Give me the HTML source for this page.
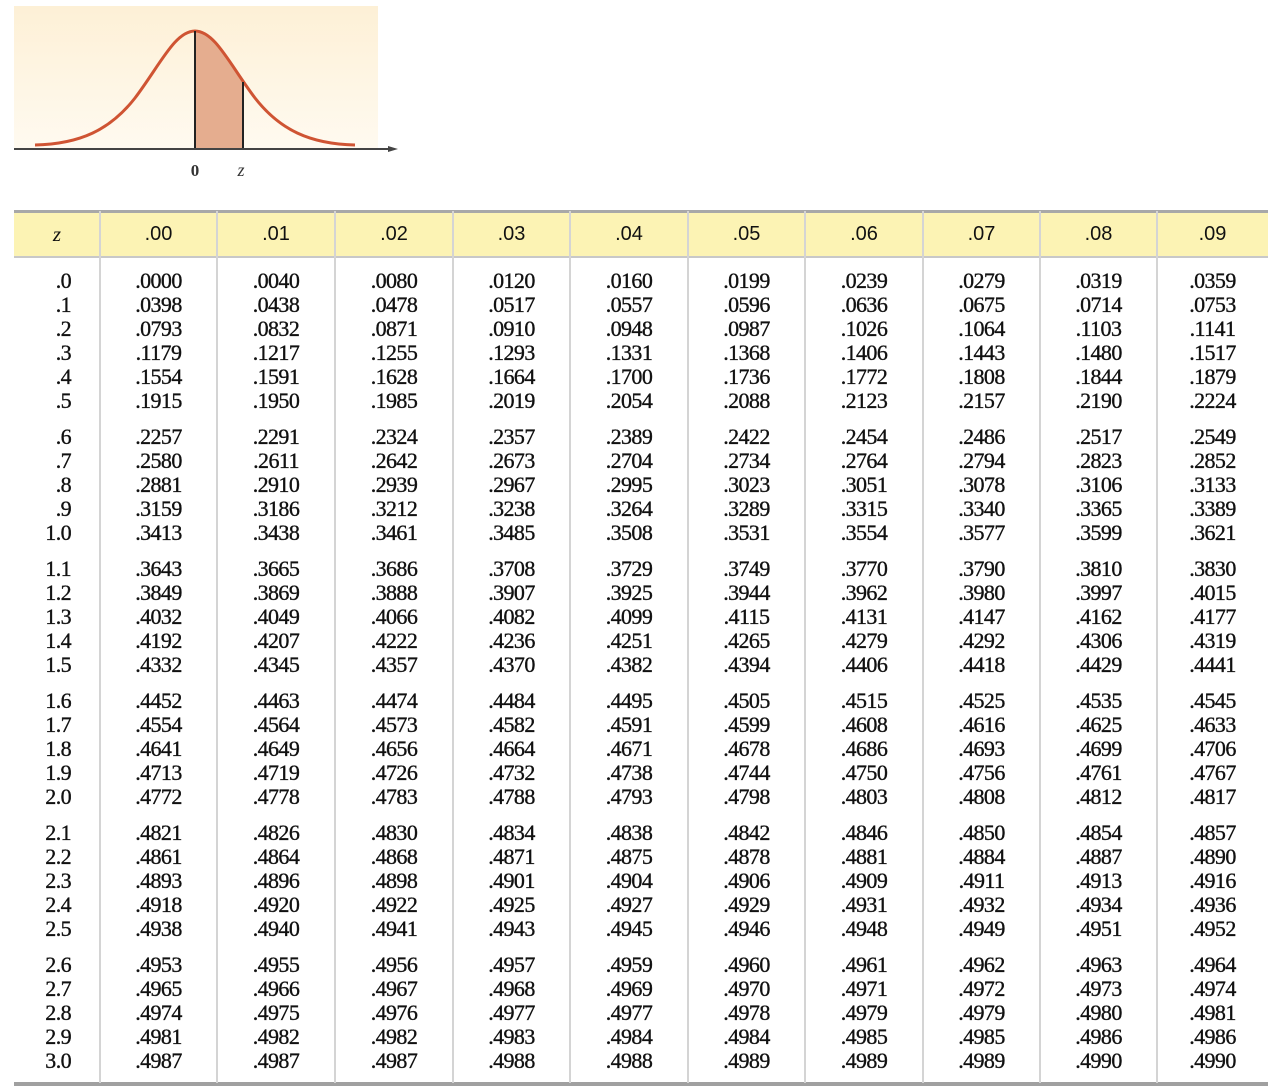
<!DOCTYPE html>
<html><head><meta charset="utf-8"><style>
body{margin:0;width:1268px;height:1086px;background:#fff;position:relative;overflow:hidden;font-family:"Liberation Serif",serif;}
.hdr{position:absolute;top:213px;left:14px;width:1254px;height:43px;background:#fcf3b4;}
.hl{position:absolute;left:14px;width:1254px;background:#9a9a9a;}
.vl{position:absolute;top:211px;height:872px;width:2px;background:#d4d4d4;}
.h{position:absolute;top:213px;height:43px;line-height:43px;text-align:center;font-family:"Liberation Sans",sans-serif;font-size:20px;color:#111;}
.col{position:absolute;top:269px;text-align:center;font-size:22px;line-height:24px;color:#111;letter-spacing:-0.6px;-webkit-text-stroke:0.35px #111;}
.col div{margin-bottom:12px;}
.zc{text-align:right;}
</style></head><body>
<svg width="420" height="190" style="position:absolute;left:0;top:0">
<defs><linearGradient id="g" x1="0" y1="0" x2="0" y2="1"><stop offset="0" stop-color="#fdf0d6"/><stop offset="1" stop-color="#fffaf0"/></linearGradient></defs>
<rect x="14" y="6" width="364" height="142" fill="url(#g)"/>
<path d="M195,31 C210,31 225,50 243,80 L243,149 L195,149 Z" fill="#e5ad8f"/>
<path fill="none" stroke="#cf5433" stroke-width="3" d="M35,145 C80,144 110,130 135,98 C160,65 175,31 195,31 C215,31 230,65 255,98 C280,130 310,144 355,145"/>
<line x1="195" y1="31" x2="195" y2="149" stroke="#222" stroke-width="2"/>
<line x1="243" y1="82" x2="243" y2="149" stroke="#222" stroke-width="2"/>
<line x1="14" y1="149" x2="392" y2="149" stroke="#444" stroke-width="2"/>
<polygon points="398,149 388,146 388,152" fill="#444"/>
<text x="195" y="176" font-family="Liberation Serif" font-weight="bold" font-size="17" text-anchor="middle" fill="#333">0</text>
<text x="241" y="176" font-family="Liberation Serif" font-style="italic" font-size="18" text-anchor="middle" fill="#333">z</text>
</svg>
<div class="hdr"></div>
<div class="hl" style="top:210px;height:3px;background:#a8a8a8"></div>
<div class="hl" style="top:256px;height:2px;background:#c8c8c8"></div>
<div class="hl" style="top:1082px;height:4px;background:#a0a0a0"></div>
<div class="vl" style="left:99px"></div><div class="vl" style="left:216px"></div><div class="vl" style="left:334px"></div><div class="vl" style="left:452px"></div><div class="vl" style="left:569px"></div><div class="vl" style="left:687px"></div><div class="vl" style="left:804px"></div><div class="vl" style="left:922px"></div><div class="vl" style="left:1039px"></div><div class="vl" style="left:1156px"></div>
<div class="h" style="left:14px;width:86px;font-style:italic;font-family:'Liberation Serif',serif;font-size:21px">z</div>
<div class="h" style="left:100px;width:117px">.00</div><div class="h" style="left:217px;width:118px">.01</div><div class="h" style="left:335px;width:118px">.02</div><div class="h" style="left:453px;width:117px">.03</div><div class="h" style="left:570px;width:118px">.04</div><div class="h" style="left:688px;width:117px">.05</div><div class="h" style="left:805px;width:118px">.06</div><div class="h" style="left:923px;width:117px">.07</div><div class="h" style="left:1040px;width:117px">.08</div><div class="h" style="left:1157px;width:111px">.09</div>

<div class="col zc" style="left:14px;width:57px"><div>.0<br>.1<br>.2<br>.3<br>.4<br>.5</div><div>.6<br>.7<br>.8<br>.9<br>1.0</div><div>1.1<br>1.2<br>1.3<br>1.4<br>1.5</div><div>1.6<br>1.7<br>1.8<br>1.9<br>2.0</div><div>2.1<br>2.2<br>2.3<br>2.4<br>2.5</div><div>2.6<br>2.7<br>2.8<br>2.9<br>3.0</div></div>

<div class="col" style="left:100px;width:117px"><div>.0000<br>.0398<br>.0793<br>.1179<br>.1554<br>.1915</div><div>.2257<br>.2580<br>.2881<br>.3159<br>.3413</div><div>.3643<br>.3849<br>.4032<br>.4192<br>.4332</div><div>.4452<br>.4554<br>.4641<br>.4713<br>.4772</div><div>.4821<br>.4861<br>.4893<br>.4918<br>.4938</div><div>.4953<br>.4965<br>.4974<br>.4981<br>.4987</div></div>

<div class="col" style="left:217px;width:118px"><div>.0040<br>.0438<br>.0832<br>.1217<br>.1591<br>.1950</div><div>.2291<br>.2611<br>.2910<br>.3186<br>.3438</div><div>.3665<br>.3869<br>.4049<br>.4207<br>.4345</div><div>.4463<br>.4564<br>.4649<br>.4719<br>.4778</div><div>.4826<br>.4864<br>.4896<br>.4920<br>.4940</div><div>.4955<br>.4966<br>.4975<br>.4982<br>.4987</div></div>

<div class="col" style="left:335px;width:118px"><div>.0080<br>.0478<br>.0871<br>.1255<br>.1628<br>.1985</div><div>.2324<br>.2642<br>.2939<br>.3212<br>.3461</div><div>.3686<br>.3888<br>.4066<br>.4222<br>.4357</div><div>.4474<br>.4573<br>.4656<br>.4726<br>.4783</div><div>.4830<br>.4868<br>.4898<br>.4922<br>.4941</div><div>.4956<br>.4967<br>.4976<br>.4982<br>.4987</div></div>

<div class="col" style="left:453px;width:117px"><div>.0120<br>.0517<br>.0910<br>.1293<br>.1664<br>.2019</div><div>.2357<br>.2673<br>.2967<br>.3238<br>.3485</div><div>.3708<br>.3907<br>.4082<br>.4236<br>.4370</div><div>.4484<br>.4582<br>.4664<br>.4732<br>.4788</div><div>.4834<br>.4871<br>.4901<br>.4925<br>.4943</div><div>.4957<br>.4968<br>.4977<br>.4983<br>.4988</div></div>

<div class="col" style="left:570px;width:118px"><div>.0160<br>.0557<br>.0948<br>.1331<br>.1700<br>.2054</div><div>.2389<br>.2704<br>.2995<br>.3264<br>.3508</div><div>.3729<br>.3925<br>.4099<br>.4251<br>.4382</div><div>.4495<br>.4591<br>.4671<br>.4738<br>.4793</div><div>.4838<br>.4875<br>.4904<br>.4927<br>.4945</div><div>.4959<br>.4969<br>.4977<br>.4984<br>.4988</div></div>

<div class="col" style="left:688px;width:117px"><div>.0199<br>.0596<br>.0987<br>.1368<br>.1736<br>.2088</div><div>.2422<br>.2734<br>.3023<br>.3289<br>.3531</div><div>.3749<br>.3944<br>.4115<br>.4265<br>.4394</div><div>.4505<br>.4599<br>.4678<br>.4744<br>.4798</div><div>.4842<br>.4878<br>.4906<br>.4929<br>.4946</div><div>.4960<br>.4970<br>.4978<br>.4984<br>.4989</div></div>

<div class="col" style="left:805px;width:118px"><div>.0239<br>.0636<br>.1026<br>.1406<br>.1772<br>.2123</div><div>.2454<br>.2764<br>.3051<br>.3315<br>.3554</div><div>.3770<br>.3962<br>.4131<br>.4279<br>.4406</div><div>.4515<br>.4608<br>.4686<br>.4750<br>.4803</div><div>.4846<br>.4881<br>.4909<br>.4931<br>.4948</div><div>.4961<br>.4971<br>.4979<br>.4985<br>.4989</div></div>

<div class="col" style="left:923px;width:117px"><div>.0279<br>.0675<br>.1064<br>.1443<br>.1808<br>.2157</div><div>.2486<br>.2794<br>.3078<br>.3340<br>.3577</div><div>.3790<br>.3980<br>.4147<br>.4292<br>.4418</div><div>.4525<br>.4616<br>.4693<br>.4756<br>.4808</div><div>.4850<br>.4884<br>.4911<br>.4932<br>.4949</div><div>.4962<br>.4972<br>.4979<br>.4985<br>.4989</div></div>

<div class="col" style="left:1040px;width:117px"><div>.0319<br>.0714<br>.1103<br>.1480<br>.1844<br>.2190</div><div>.2517<br>.2823<br>.3106<br>.3365<br>.3599</div><div>.3810<br>.3997<br>.4162<br>.4306<br>.4429</div><div>.4535<br>.4625<br>.4699<br>.4761<br>.4812</div><div>.4854<br>.4887<br>.4913<br>.4934<br>.4951</div><div>.4963<br>.4973<br>.4980<br>.4986<br>.4990</div></div>

<div class="col" style="left:1157px;width:111px"><div>.0359<br>.0753<br>.1141<br>.1517<br>.1879<br>.2224</div><div>.2549<br>.2852<br>.3133<br>.3389<br>.3621</div><div>.3830<br>.4015<br>.4177<br>.4319<br>.4441</div><div>.4545<br>.4633<br>.4706<br>.4767<br>.4817</div><div>.4857<br>.4890<br>.4916<br>.4936<br>.4952</div><div>.4964<br>.4974<br>.4981<br>.4986<br>.4990</div></div>
</body></html>
